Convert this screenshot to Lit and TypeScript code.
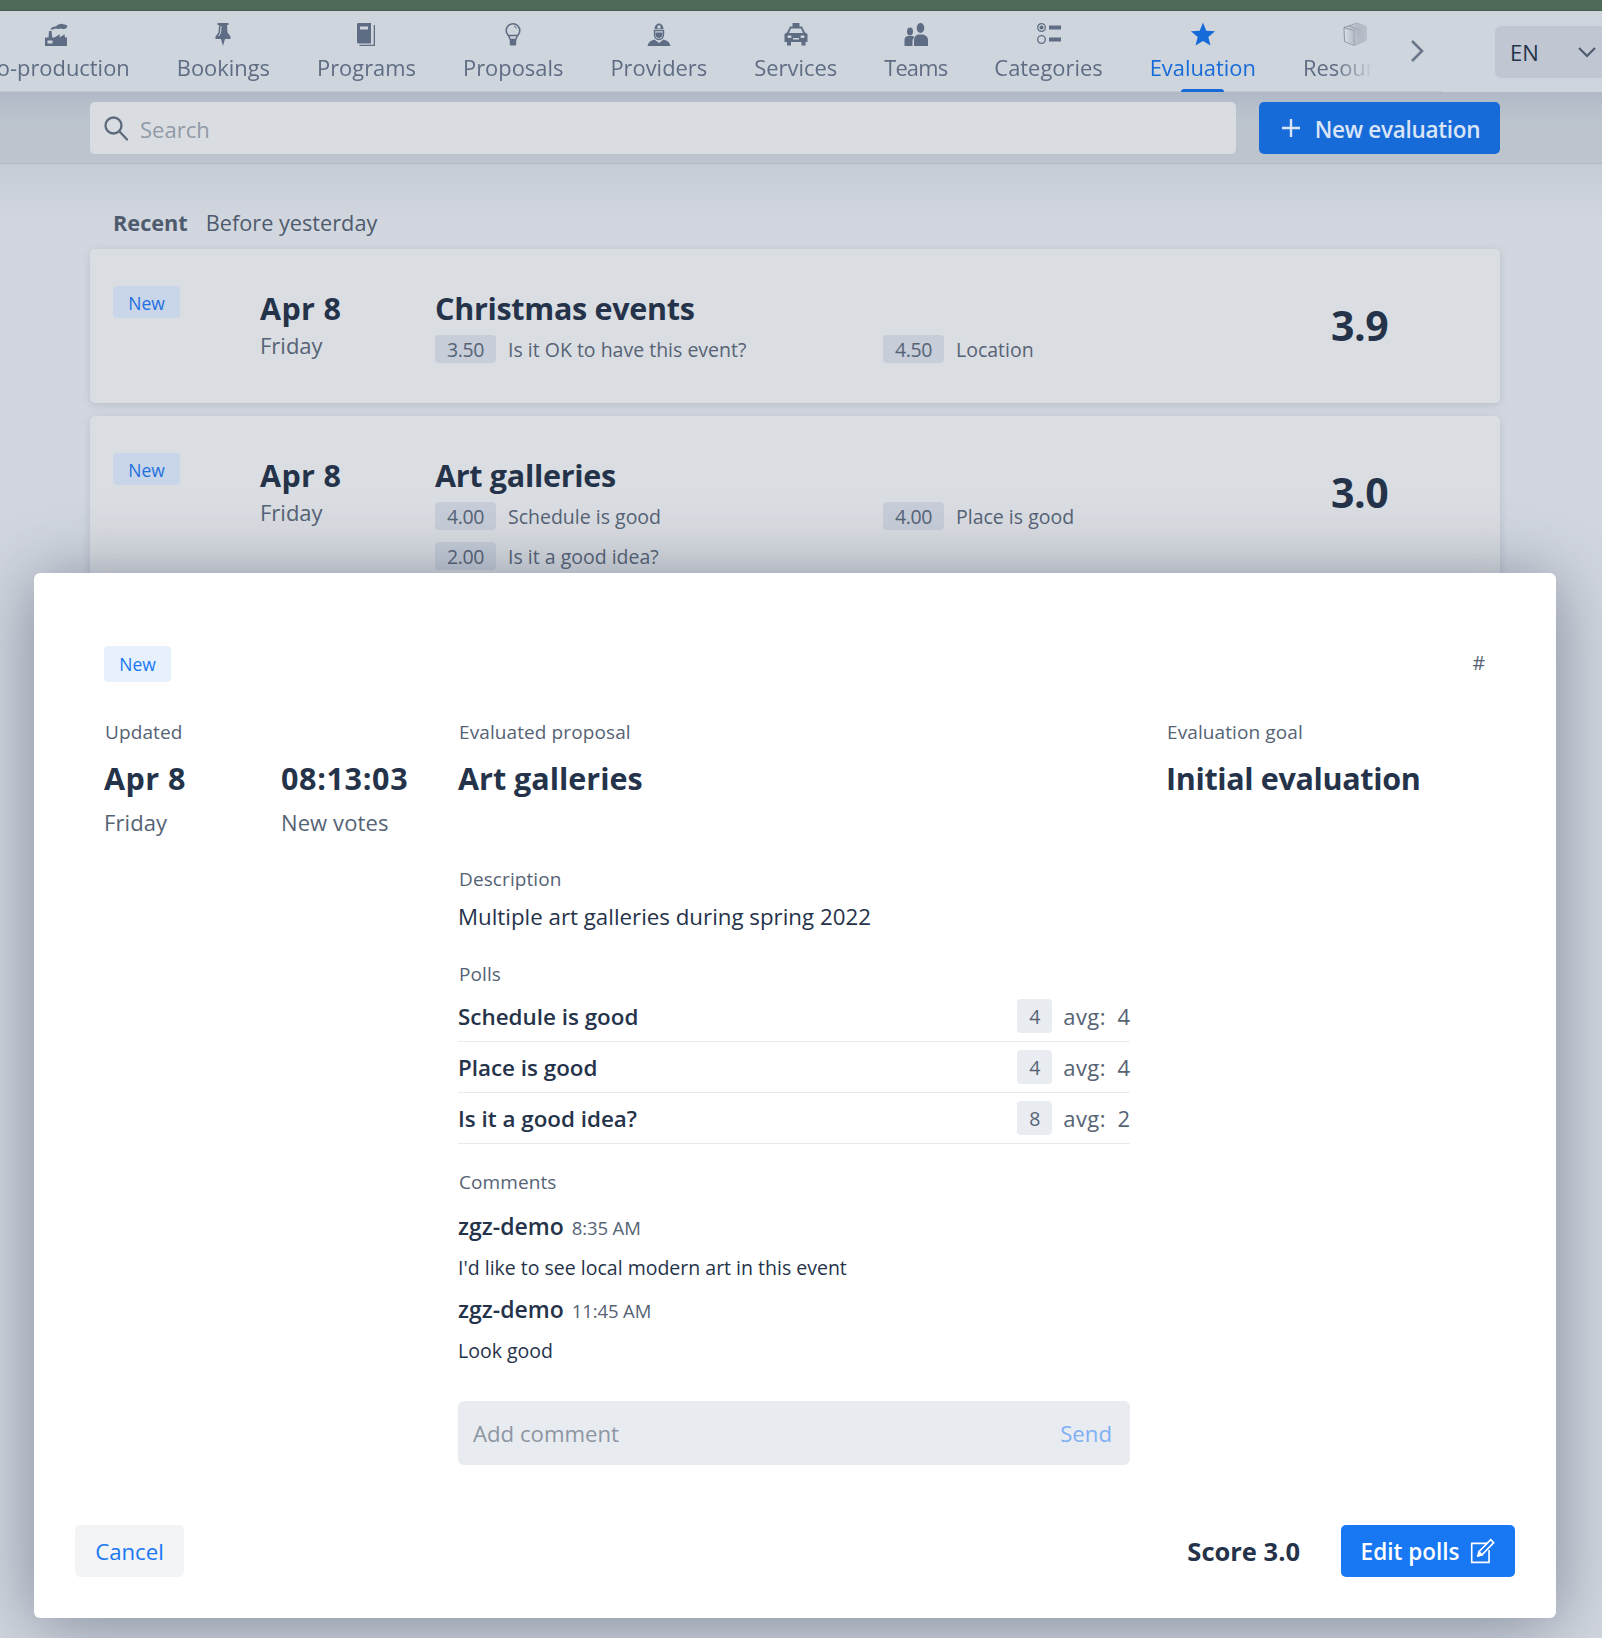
import { LitElement, html, css, svg } from "lit";
import { customElement } from "lit/decorators.js";

const I: Record<string, any> = {
  factory: svg`<path d="M1 24V15.5h3.5L5 9h2.600l.6 6.500h2.300l5.200-3.200v3.200l4.800-3.200 .5 3.200h2V24z"/><rect x="3.500" y="18.500" width="5" height="3" fill="#cfd5dd"/><path d="M6.500 7.500C8 4 10 5 12 4.200 14 2 18 1 20 2.500c2.500-.2 4 1.500 3 3-1 1.500-4 2-6 1-2 1-5 0-7 .5-1.500.3-2.500 1-3.500.5z"/>`,
  pin: svg`<path d="M6.500 1h11v2H16l.5 7.500 3 4v2.500H14L12 24l-2-7H4.500v-2.500l3-4L8 3H6.500z"/><path d="M10 4l-.4 7-2 3" fill="none" stroke="#cfd5dd" stroke-width="1"/>`,
  book: svg`<path d="M3 2.500C3 1.700 3.600 1 4.500 1H17v20.500H4.500c-.8 0-1.500-.7-1.500-1.500z"/><path d="M17.500 3H21v21H5.500v-1.300h14.200V3z"/><rect x="6" y="4.500" width="8" height="3" fill="#cfd5dd"/>`,
  bulb: svg`<circle cx="12" cy="8.500" r="6.800" fill="none" stroke="currentColor" stroke-width="1.600"/><path d="M7.500 13.500l1.800 4h5.400l1.800-4z" fill="#cfd5dd" stroke="currentColor" stroke-width="1.500"/><rect x="8.800" y="17" width="6.400" height="6.500" rx="1"/><path d="M13 4c1.300.4 2.200 1.300 2.600 2.600" fill="none" stroke="currentColor" stroke-width="1"/>`,
  provider: svg`<path d="M7.500 7c0-3 2-5.500 4.500-5.500S16.500 4 16.500 7z"/><circle cx="12" cy="5" r="1.700" fill="#cfd5dd"/><path d="M7.500 8.500h9v4c0 3-2 5-4.500 5s-4.500-2-4.500-5z" fill="none" stroke="currentColor" stroke-width="1.400"/><path d="M8.500 10.500h7v2.500c0 1.500-1.500 3-3.500 3s-3.500-1.500-3.500-3z"/><path d="M0.500 24c.5-3.500 3-5.500 7-6.500l4.500 3.500 4.500-3.500c4 1 6.500 3 7 6.500z"/>`,
  car: svg`<path d="M8.500 1h7v3.500h2.500l3 6 2.500 1.500v8h-2V23.500h-4V20H7v3.500H3V20H.5v-8L3 10.500l3-6h2.500z"/><path d="M7 6.500h10l2 4.500H5z" fill="#cfd5dd"/><rect x="3.500" y="13.500" width="4" height="2.500" rx="1" fill="#cfd5dd"/><rect x="16.500" y="13.500" width="4" height="2.500" rx="1" fill="#cfd5dd"/><rect x="9" y="16" width="6" height="1.500" fill="#cfd5dd"/>`,
  team: svg`<ellipse cx="6" cy="9.500" rx="3" ry="4"/><path d="M0.500 24v-6.500c0-2 1.500-3 3-3.500h5c1 .3 1.800.9 2 1.500-1.500 1-2 2.500-2 4V24z"/><ellipse cx="16.500" cy="6" rx="3.800" ry="5"/><path d="M10 24v-6c0-3 2-5 4-5.500h5c2.500.5 5 2.500 5 5.500v6z"/>`,
  cat: svg`<circle cx="4.500" cy="5.500" r="3.800" fill="none" stroke="currentColor" stroke-width="1.300"/><circle cx="4.500" cy="5.500" r="2"/><circle cx="4.500" cy="17.500" r="3.800" fill="none" stroke="currentColor" stroke-width="1.300"/><rect x="12" y="3.500" width="12" height="4"/><rect x="12" y="15.500" width="12" height="4"/>`,
  star: svg`<path d="M12 .5l3.300 8.200 8.800.6-6.800 5.600 2.200 8.600L12 18.900 4.500 23.600l2.200-8.600L-.1 9.300l8.800-.6z"/>`,
  box: svg`<defs><linearGradient id="bx" x1="0" x2="1"><stop offset="0" stop-color="#dfe3e8"/><stop offset="1" stop-color="#5f6b7c"/></linearGradient></defs><path d="M1 5.500L14 1l9.500 3.500v14L11 23.500 1.500 19.500z" fill="url(#bx)" stroke="#6a7688" stroke-width=".9"/><path d="M1 5.500L11 8.500l12.500-4M11 8.500v15M5.500 4l10 3.300V13" fill="none" stroke="#6a7688" stroke-width="1"/>`,
};

const NAV = [
  ["Co-production", "factory"], ["Bookings", "pin"], ["Programs", "book"], ["Proposals", "bulb"],
  ["Providers", "provider"], ["Services", "car"], ["Teams", "team"], ["Categories", "cat"],
  ["Evaluation", "star"], ["Resources", "box"],
];

const CARDS = [
  { title: "Christmas events", score: "3.9", polls: [["3.50", "Is it OK to have this event?"], ["4.50", "Location"]] },
  { title: "Art galleries", score: "3.0", polls: [["4.00", "Schedule is good"], ["4.00", "Place is good"], ["2.00", "Is it a good idea?"]] },
];

const POLLS = [["Schedule is good", "4", "4"], ["Place is good", "4", "4"], ["Is it a good idea?", "8", "2"]];
const COMMENTS = [["8:35 AM", "I'd like to see local modern art in this event"], ["11:45 AM", "Look good"]];

@customElement("app-root")
export class AppRoot extends LitElement {
  static styles = css`
    :host { display: block; position: relative; height: 1638px; overflow: hidden; background: #d2d7df;
      font-family: "Open Sans", "Noto Sans", sans-serif; color: #25334a; }
    * { box-sizing: border-box; }
    .strip { height: 11px; background: #4e6a59; border-bottom: 1px solid #435e4e; }
    .top { height: 81px; display: flex; background: linear-gradient(#bfc6d1, #bfc6d1) 0 100% / 1442px 1px no-repeat, #cfd5dd; }
    .viewport { width: 1372px; height: 81px; overflow: hidden; flex: none;
      -webkit-mask-image: linear-gradient(90deg, #000 1335px, transparent 1374px); mask-image: linear-gradient(90deg, #000 1335px, transparent 1374px); }
    .track { display: flex; gap: 47px; margin-left: -17px; width: max-content; }
    .item { display: flex; flex-direction: column; align-items: center; height: 81px; position: relative; color: #5e6d83; }
    .item svg { width: 24px; height: 24px; margin-top: 11px; fill: currentColor; overflow: visible; }
    .item span { font-size: 21.900px; line-height: 30px; margin-top: 7px; white-space: nowrap; }
    .item.tight span { letter-spacing: -.8px; }
    .item.on { color: #176bd9; }
    .item.on::after { content: ""; position: absolute; left: 50%; margin-left: -21.500px; bottom: 0; width: 43px; height: 3px; background: #176bd9; border-radius: 3px 3px 0 0; }
    .next { width: 123px; flex: none; display: flex; align-items: center; padding-left: 38px; }
    .next svg { width: 14px; height: 24px; fill: none; stroke: #6a778a; stroke-width: 2.600; margin-top: -1px; }
    .lang { margin: 15px 0 0 0; width: 107px; flex: none; height: 52px; background: #c0c7d2; border-radius: 6px 0 0 6px; display: flex; align-items: center; padding-left: 15px; font-size: 22px; gap: 38px; }
    .lang svg { width: 20px; height: 12px; fill: none; stroke: #4e5c70; stroke-width: 2.200; flex: none; }
    .bar { height: 72px; display: flex; gap: 23px; padding: 10px 102px 0 90px; border-bottom: 1px solid #aeb7c4;
      background: linear-gradient(#b0b9c6, #bcc4ce 40%, #bdc4ce); }
    .search { flex: 1; height: 52px; border-radius: 5px; background: #d9dde2; display: flex; align-items: center; padding: 1px 0 0 13px; gap: 11px; color: #919aa6; font-size: 22px; }
    .search svg { width: 26px; height: 26px; margin-top: -2px; fill: none; stroke: #5e6b7c; stroke-width: 2.300; stroke-linecap: round; }
    .new { width: 241px; height: 52px; background: #176bd9; color: #d9e5f7; border-radius: 5px; display: flex; align-items: center; justify-content: center; gap: 14px; padding: 2px 0 0 2px; font-weight: 600; font-size: 22.500px; letter-spacing: -.3px; }
    .new svg { width: 20px; height: 20px; stroke: #d9e5f7; stroke-width: 2.400; margin-top: -2px; }
    .page { padding: 0 102px 0 90px; background: linear-gradient(#c6ccd5, #d2d7df 60px); height: 1200px; }
    .tabs { display: flex; gap: 18px; padding: 44px 0 0 23px; font-size: 21.700px; line-height: 30px; color: #4e5b6e; height: 85px; }
    .tabs b { font-weight: 700; }
    .card { background: #dadde2; border-radius: 5px; box-shadow: 0 2px 8px rgba(70,85,110,.18); padding: 37px 0 40px 23px; display: grid; grid-template-columns: 147px 175px 896px 1fr; margin-bottom: 13px; }
    .pill { display: inline-flex; align-items: center; justify-content: center; width: 67px; height: 32px; padding-top: 1px; background: #c9d6e9; color: #1e70de; border-radius: 4px; font-size: 17.500px; }
    .date { padding-top: 3px; }
    .date b { display: block; font-size: 30.500px; line-height: 38px; font-weight: 700; letter-spacing: .35px; color: #25334a; }
    .date span { display: block; font-size: 22px; line-height: 36px; color: #566375; }
    .mid { padding-top: 3px; }
    .mid h3 { margin: 0; font-size: 30.500px; line-height: 38px; font-weight: 700; letter-spacing: -.3px; color: #25334a; }
    .grid { display: grid; grid-template-columns: 448px 448px; row-gap: 12px; margin-top: 8px; }
    .poll { display: flex; gap: 12px; align-items: center; height: 28px; font-size: 19.500px; color: #566375; }
    .poll i { font-style: normal; width: 61px; height: 28px; border-radius: 4px; background: #c7ced9; display: flex; align-items: center; justify-content: center; letter-spacing: -.4px; }
    .score { font-size: 41px; font-weight: 700; padding: 13px 0 0 0; line-height: 52px; letter-spacing: -.5px; }
    .modal { position: absolute; left: 34px; top: 573px; width: 1522px; height: 1045px; background: #fff; border-radius: 6px; box-shadow: 0 6px 70px rgba(45,60,85,.5); padding: 73px 41px 41px; display: flex; flex-direction: column; }
    .mhead { display: flex; justify-content: space-between; align-items: center; padding: 0 30px 0 29px; height: 36px; }
    .mhead .pill { background: #e7f1fe; color: #1877f2; height: 36px; padding-top: 0; }
    .hash { color: #566375; font-size: 19.500px; padding-bottom: 4px; }
    .cols { display: grid; grid-template-columns: 177px 177px 708px 1fr; padding-left: 29px; margin-top: 36px; flex: 1; }
    .lab { font-size: 19px; line-height: 28px; color: #566375; letter-spacing: .1px; padding-left: 1px; }
    .big { font-size: 30.500px; line-height: 40px; font-weight: 700; margin-top: 12px; white-space: nowrap; }
    .big.day { letter-spacing: .5px; }
    .big.time { letter-spacing: .65px; }
    .big.goal { letter-spacing: -.35px; }
    .sub { font-size: 22px; line-height: 30px; color: #566375; letter-spacing: .1px; margin-top: 9px; }
    .c3 { width: 672px; }
    .desc { font-size: 22.300px; line-height: 30px; margin-top: 9px; }
    .sec { margin-top: 67px; }
    .sec2 { margin-top: 28px; }
    .sec3 { margin: 24px 0 15px; }
    .row { display: flex; align-items: center; height: 51px; border-bottom: 1px solid #e7eaee; font-size: 22px; color: #566375; }
    .row b { flex: 1; color: #25334a; font-weight: 600; font-size: 22.400px; }
    .row i { font-style: normal; width: 35px; height: 34px; background: #e9ecf0; border-radius: 4px; display: flex; align-items: center; justify-content: center; font-size: 19.500px; margin-right: 11px; }
    .row span { letter-spacing: .45px; }
    .row u { text-decoration: none; margin-left: 11px; min-width: 13px; text-align: right; }
    .rows { margin-top: 3px; }
    .who { line-height: 30px; font-size: 23px; font-weight: 600; margin-top: 11px; white-space: nowrap; }
    .who small { font-size: 18.500px; font-weight: 400; color: #566375; letter-spacing: -.1px; margin-left: 2px; }
    .text { font-size: 19.500px; line-height: 30px; margin-top: 10px; }
    .add { height: 64px; margin-top: 35px; background: #e8ebf0; border-radius: 6px; display: flex; align-items: center; justify-content: space-between; padding: 0 18px 0 15px; font-size: 22.200px; color: #8d96a3; }
    .add span:last-child { color: #7fb0f5; }
    .foot { display: flex; align-items: center; height: 52px; }
    .cancel { width: 109px; height: 52px; background: #f3f4f6; border-radius: 5px; color: #1877f2; display: flex; align-items: center; justify-content: center; font-size: 22.200px; }
    .total { margin-left: auto; font-size: 25.500px; font-weight: 700; margin-right: 41px; }
    .edit { width: 174px; height: 52px; background: #1877f2; color: #fff; border-radius: 5px; display: flex; align-items: center; justify-content: center; gap: 10px; font-size: 22.500px; font-weight: 600; }
    .edit svg { width: 26px; height: 26px; fill: none; stroke: #fff; stroke-width: 1.500; flex: none; }
  `;

  render() {
    return html`
      <div class="strip"></div>
      <div class="top">
        <div class="viewport"><div class="track">
          ${NAV.map(([n, ic]) => html`<div class="item ${n === "Evaluation" ? "on" : n === "Teams" ? "tight" : ""}"><svg viewBox="0 0 24 24">${I[ic]}</svg><span>${n}</span></div>`)}
        </div></div>
        <div class="next"><svg viewBox="0 0 14 24"><path d="M2 2l10 10L2 22"/></svg></div>
        <div class="lang"><span>EN</span><svg viewBox="0 0 20 12"><path d="M2 2l8 8 8-8"/></svg></div>
      </div>
      <div class="bar">
        <div class="search"><svg viewBox="0 0 26 26"><circle cx="10.500" cy="10.500" r="8"/><path d="M16.500 16.500L24 24.500"/></svg><span>Search</span></div>
        <div class="new"><svg viewBox="0 0 20 20"><path d="M10 1v18M1 10h18"/></svg><span>New evaluation</span></div>
      </div>
      <div class="page">
        <div class="tabs"><b>Recent</b><span>Before yesterday</span></div>
        ${CARDS.map((c) => html`
          <div class="card">
            <div><span class="pill">New</span></div>
            <div class="date"><b>Apr 8</b><span>Friday</span></div>
            <div class="mid"><h3>${c.title}</h3>
              <div class="grid">${c.polls.map((p) => html`<div class="poll"><i>${p[0]}</i><span>${p[1]}</span></div>`)}</div>
            </div>
            <div class="score">${c.score}</div>
          </div>`)}
      </div>
      <div class="modal">
        <div class="mhead"><span class="pill">New</span><span class="hash">#</span></div>
        <div class="cols">
          <div><div class="lab">Updated</div><div class="big day">Apr 8</div><div class="sub">Friday</div></div>
          <div><div class="lab">&nbsp;</div><div class="big time">08:13:03</div><div class="sub">New votes</div></div>
          <div class="c3">
            <div class="lab">Evaluated proposal</div><div class="big">Art galleries</div>
            <div class="lab sec">Description</div><div class="desc">Multiple art galleries during spring 2022</div>
            <div class="lab sec2">Polls</div>
            <div class="rows">${POLLS.map((p) => html`<div class="row"><b>${p[0]}</b><i>${p[1]}</i><span>avg:</span><u>${p[2]}</u></div>`)}</div>
            <div class="lab sec3">Comments</div>
            ${COMMENTS.map((c) => html`<div class="who">zgz-demo <small>${c[0]}</small></div><div class="text">${c[1]}</div>`)}
            <div class="add"><span>Add comment</span><span>Send</span></div>
          </div>
          <div><div class="lab">Evaluation goal</div><div class="big goal">Initial evaluation</div></div>
        </div>
        <div class="foot">
          <div class="cancel">Cancel</div>
          <div class="total">Score 3.0</div>
          <div class="edit"><span>Edit polls</span><svg viewBox="0 0 24 24"><path d="M17 5H2.500v17.500h16V11"/><path d="M20 1.500l2.800 2.800L12 15.500l-3.800 1 1-3.800z"/><path d="M8.500 16.500l1-3.500 2.500 2.500z" fill="#fff"/></svg></div>
        </div>
      </div>
    `;
  }
}
